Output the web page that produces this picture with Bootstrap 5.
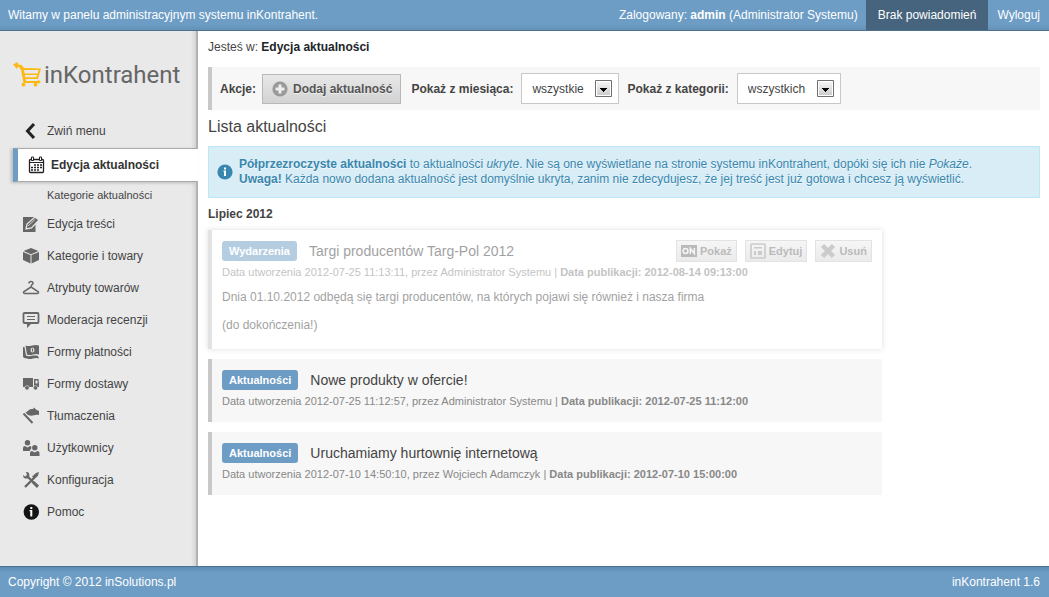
<!DOCTYPE html>
<html lang="pl">
<head>
<meta charset="utf-8">
<meta name="viewport" content="width=device-width, initial-scale=1">
<title>inKontrahent – Edycja aktualności</title>
<link href="https://cdn.jsdelivr.net/npm/bootstrap@5.3.0/dist/css/bootstrap.min.css" rel="stylesheet">
<style>
:root { --brand: #6d9dc5; --brand-dark: #4b7291; --ink: #444; }
body { font: 12px/16px "Liberation Sans", Arial, sans-serif; color: var(--ink); }
a { color: inherit; text-decoration: none; }
b { font-weight: 700; }
.bar { background: var(--brand); color: #fff; height: 31px; }
.bar-top { background: linear-gradient(var(--brand) 24px, #6591b6); border-bottom: 1px solid var(--brand-dark); }
.bar-bottom { background: linear-gradient(#5f8bb0, var(--brand) 6px); border-top: 1px solid var(--brand-dark); padding: 0 9px 0 8px; }
.notice { background: #46647d; padding: 0 12px; }
.logout { padding: 0 9px; }
.sidebar { width: 198px; background: linear-gradient(to left, #d4d4d4, #e9e9e9 5px); border-right: 2px solid #b2b2b2; }
.brand { height: 83px; padding: 4px 0 0 13px; font: 24px/32px Roboto, sans-serif; color: #666; gap: 2px; }
.menu-row { height: 32px; padding-left: 22px; gap: 7px; }
.menu-row svg, .current svg { flex: none; width: 18px; height: 18px; }
.menu-row svg { fill: #666; }
.collapse-row { height: 34px; }
.current { height: 34px; margin: 0 -2px 0 13px; padding-left: 9px; gap: 6px; background: #fff; color: #333; font-weight: 700; border: 1px solid #aaa; border-width: 1px 0; border-left: 5px solid var(--brand); box-shadow: -2px 1px 3px #bbb; }
.sub-row { height: 26px; padding-left: 47px; font-size: 11px; }
.content { padding: 8px 9px 8px 10px; }
.actions { height: 43px; margin-top: 12px; padding-left: 8px; background: #f7f7f7; border-left: 4px solid #c8c8c8; }
.actions-label { margin-right: 6px; }
.add { height: 30px; margin-right: 10px; padding: 0 8px 0 9px; gap: 5px; border: 1px solid #b8b8b8; background: linear-gradient(#e8e8e8, #d2d2d2); color: #555; font-weight: 700; text-shadow: 0 1px #eee; }
.add svg { width: 16px; height: 16px; }
.picker { appearance: none; height: 31px; padding: 0 34px 0 10px; border: 1px solid #c8c8c8; border-radius: 0; color: var(--ink); background: #fff url("data:image/svg+xml,%3Csvg xmlns='http://www.w3.org/2000/svg' width='17' height='17'%3E%3Cdefs%3E%3ClinearGradient id='g' x2='0' y2='1'%3E%3Cstop stop-color='%23f4f4f4'/%3E%3Cstop offset='1' stop-color='%23ccc'/%3E%3C/linearGradient%3E%3C/defs%3E%3Cpath d='M.5.5h16v16H.5z' fill='%23fff' stroke='%23707070'/%3E%3Cpath d='M2 2h13v13H2z' fill='url(%23g)'/%3E%3Cpath d='M5 8h7v1h-1v1h-1v1H9v1H8v-1H7v-1H6V9H5z'/%3E%3C/svg%3E") no-repeat right 6px center; }
.page-title { font-size: 16px; line-height: 20px; margin: 7px 0 9px; font-weight: 400; }
.info { height: 52px; padding: 0 8px; gap: 6px; background: #d9edf7; border: 1px solid #bce8f1; color: #3a87ad; line-height: 15px; text-shadow: 0 1px #f0f8fc; }
.info svg { flex: none; width: 16px; height: 16px; }
.month { font-size: 12px; line-height: 16px; margin: 8px 0; font-weight: 700; }
.entry { width: 81%; padding: 11px 10px 13px; margin-bottom: 10px; border-left: 4px solid #c8c8c8; background: #f7f7f7; }
.entry-head { min-height: 20px; margin-bottom: 4px; }
.entry-title { font-size: 14px; line-height: 18px; margin: 0; font-weight: 400; }
.tag { background: var(--brand); color: #fff; font-size: 11px; line-height: 20px; font-weight: 700; padding: 0 7px; border-radius: 3px; margin-right: 12px; }
.meta { font-size: 11px; line-height: 15px; color: #888; }
.draft { background: #fff; box-shadow: 0 0 5px #bbb; opacity: .5; height: 119px; padding-top: 10px; }
.draft .entry-head { margin-bottom: 3px; }
.draft .meta { margin-bottom: 9px; }
.draft p { margin: 0 0 12px; }
.tools { column-gap: 8px; }
.tool { height: 22px; padding: 0 4px; gap: 3px; border: 1px solid #c8c8c8; background: linear-gradient(#eee, #d8d8d8); color: #777; font-size: 11px; font-weight: 700; }
.tool svg { width: 16px; height: 16px; }
</style>
</head>
<body class="d-flex flex-column min-vh-100">
<header class="bar bar-top d-flex align-items-stretch justify-content-between">
  <div class="ps-2 d-flex align-items-center">Witamy w panelu administracyjnym systemu inKontrahent.</div>
  <nav class="d-flex align-items-stretch">
    <span class="d-flex align-items-center pe-2"><span>Zalogowany: <b>admin</b> (Administrator Systemu)</span></span>
    <a class="notice d-flex align-items-center" href="#">Brak powiadomień</a>
    <a class="logout d-flex align-items-center" href="#">Wyloguj</a>
  </nav>
</header>

<div class="d-flex flex-grow-1">
  <aside class="sidebar flex-shrink-0">
    <a class="brand d-flex align-items-center" href="#">
      <svg width="29" height="25" viewBox="0 0 29 25" aria-hidden="true"><path d="M0 2.500 4.500 0 5 2.500l3.500.5L11 6l17 .500L25 17H11l-.7-1.700h13l.8-2.300H10.500L10 11.500h14.700l1-3.500H11l2 11h12v-1.500l3 2.500-3 2v-1H10.500L8 8 6.500 5.500 4.500 5 4 7z" fill="#fdb813"/><circle cx="10.500" cy="22.700" r="1.900" fill="#fdb813"/><circle cx="22.500" cy="22.700" r="1.900" fill="#fdb813"/></svg>
      <span>inKontrahent</span>
    </a>
    <nav>
      <a class="menu-row collapse-row d-flex align-items-center" href="#"><svg viewBox="0 0 18 18"><path d="m12 2-6.500 7 6.500 7" fill="none" stroke="#222" stroke-width="3"/></svg>Zwiń menu</a>
      <a class="current d-flex align-items-center" href="#"><svg viewBox="0 0 18 18"><rect x="2.500" y="3.500" width="14" height="13" rx="1" fill="#fff" stroke="#222" stroke-width="1.300"/><path d="M2 6.500h15" stroke="#222"/><path d="M4.500 1h2v3.500h-2zM12.500 1h2v3.500h-2z" fill="#fff" stroke="#222"/><path d="M7 9h8M4 11.500h11M4 14h8" stroke="#222" stroke-width="1.700" stroke-dasharray="2 1"/></svg>Edycja aktualności</a>
      <a class="sub-row d-flex align-items-center" href="#">Kategorie aktualności</a>
      <a class="menu-row d-flex align-items-center" href="#"><svg viewBox="0 0 18 18"><path d="M1 2h12v15H1zM12 9h1.500v8H12z"/><path d="m4 14 1-5 8-7 4 3-7.500 8z" fill="#666" stroke="#e9e9e9" stroke-width="1.300"/><path d="m6 11 7-6.500" stroke="#e9e9e9" stroke-width=".8"/></svg>Edycja treści</a>
      <a class="menu-row d-flex align-items-center" href="#"><svg viewBox="0 0 18 18"><path d="m9 1 7.500 3L9 7.200 1.500 4zM1 5l7.500 3v8.500L1 13zM17 5v8l-7.500 3.500V8z"/></svg>Kategorie i towary</a>
      <a class="menu-row d-flex align-items-center" href="#"><svg viewBox="0 0 18 18"><path d="M7 4.500C7 2 11 2 11 4.200 11 5.500 9 5.500 9 8l7 4.500c1 1 .5 2-.5 2H2.500c-1 0-1.500-1-.5-2L9 8" fill="none" stroke="#666" stroke-width="1.500"/></svg>Atrybuty towarów</a>
      <a class="menu-row d-flex align-items-center" href="#"><svg viewBox="0 0 18 18"><path d="M2.500 2h13q1 0 1 1v8q0 1-1 1h-13q-1 0-1-1V3q0-1 1-1z" fill="none" stroke="#666" stroke-width="1.800"/><path d="M5 12h5l-5 5z"/><path d="M5 5.500h8M5 8.500h8" stroke="#666" stroke-width="1.200"/></svg>Moderacja recenzji</a>
      <a class="menu-row d-flex align-items-center" href="#"><svg viewBox="0 0 18 18"><path d="M3.500 2.500c5 2 8-2 13.500 0v9c-5-2-7 2-12 0zM1 4h1.500l1.500 8.500c4 2 7-1 12 .5l1 2.500c-5-2-7 2-12 0-2 0-4-1-4-2z"/><ellipse cx="10.500" cy="7" rx="2" ry="2.600" fill="#ddd"/><path d="M10.500 5.500v3" stroke="#666"/></svg>Formy płatności</a>
      <a class="menu-row d-flex align-items-center" href="#"><svg viewBox="0 0 18 18"><path d="M1 3h10v9H1zM12 4h4.500l.5 5v3h-5z"/><path d="M13.500 5.500h2v3h-2z" fill="#eee"/><circle cx="5" cy="12.800" r="2.200" stroke="#e9e9e9" stroke-width=".6"/><circle cx="13.500" cy="12.800" r="2.200" stroke="#e9e9e9" stroke-width=".6"/></svg>Formy dostawy</a>
      <a class="menu-row d-flex align-items-center" href="#"><svg viewBox="0 0 18 18"><path d="M3.500 5.500C7 4 6 2 11 2l1-1.500 2 2 3 1.500v4c-5-1-6 2-11 0z"/><path d="m1.500 6.500 9 9.500" stroke="#666" stroke-width="2"/></svg>Tłumaczenia</a>
      <a class="menu-row d-flex align-items-center" href="#"><svg viewBox="0 0 18 18"><circle cx="5.500" cy="3.800" r="2.700"/><path d="M1 9q0-2 2-2l2.500 1.500L8 7q1.500 0 1.500 2l-2 3H1z"/><circle cx="12.800" cy="8.700" r="2.700"/><path d="M8 14q0-2 2-2l2.700 1.500 2.800-1.500q2 0 2 2v3H8z"/></svg>Użytkownicy</a>
      <a class="menu-row d-flex align-items-center" href="#"><svg viewBox="0 0 18 18"><path d="m3 16 12-12M15.500 15.500 5 5" stroke="#666" stroke-width="2.400"/><path d="M4 1c3 0 4 2 3 5L5.500 7.500C3 8 1 7 1 4l2 1.500L5 4zM14 2l3-1-1 3.500-4 3-2-2zM12 10l5 4.500-2 2.500-5-5z"/></svg>Konfiguracja</a>
      <a class="menu-row d-flex align-items-center" href="#"><svg viewBox="0 0 18 18"><circle cx="9.300" cy="9" r="7.700" fill="#151515"/><path d="M8.300 4h2v2h-2zM7.500 7h2.800v6.500h-2V8.200h-.8z" fill="#fff"/></svg>Pomoc</a>
    </nav>
  </aside>

  <main class="content flex-grow-1">
    <div>Jesteś w: <b class="text-dark">Edycja aktualności</b></div>
    <form class="actions d-flex align-items-center">
      <b class="actions-label">Akcje:</b>
      <button type="button" class="add d-flex align-items-center"><svg viewBox="0 0 16 16"><circle cx="8" cy="8" r="7.600" fill="#999"/><path d="M6.500 3.500h3v3h3v3h-3v3h-3v-3h-3v-3h3z" fill="#eee"/></svg>Dodaj aktualność</button>
      <label class="fw-bold me-2" for="month">Pokaż z miesiąca:</label>
      <select class="picker me-2" id="month"><option>wszystkie</option></select>
      <label class="fw-bold me-2" for="category">Pokaż z kategorii:</label>
      <select class="picker" id="category"><option>wszystkich</option></select>
    </form>

    <h1 class="page-title">Lista aktualności</h1>
    <div class="info d-flex align-items-center" role="note">
      <svg viewBox="0 0 16 16"><circle cx="8" cy="8" r="7.600" fill="#3a87ad"/><path d="M7 3.500h2v2H7zM6.500 6.500H9V12H7V7.700h-.5z" fill="#fff"/></svg>
      <div><b>Półprzezroczyste aktualności</b> to aktualności <i>ukryte</i>. Nie są one wyświetlane na stronie systemu inKontrahent, dopóki się ich nie <i>Pokaże</i>.<br><b>Uwaga!</b> Każda nowo dodana aktualność jest domyślnie ukryta, zanim nie zdecydujesz, że jej treść jest już gotowa i chcesz ją wyświetlić.</div>
    </div>

    <h2 class="month">Lipiec 2012</h2>
    <article class="entry draft">
      <div class="entry-head d-flex align-items-center">
        <span class="tag">Wydarzenia</span>
        <h3 class="entry-title">Targi producentów Targ-Pol 2012</h3>
        <div class="d-flex ms-auto tools">
          <button type="button" class="tool d-flex align-items-center"><svg viewBox="0 0 16 16"><path d="M0 2h16v12H0z" fill="#777"/><path d="M9.300 11V5.500l4 5V5" fill="none" stroke="#eee" stroke-width="1.500"/><ellipse cx="4.500" cy="8" rx="2.400" ry="2.500" fill="none" stroke="#eee" stroke-width="1.500"/></svg>Pokaż</button>
          <button type="button" class="tool d-flex align-items-center"><svg viewBox="0 0 16 16"><rect x="1" y="1" width="14" height="14" rx="1" fill="none" stroke="#999" stroke-width="1.700"/><path d="M4 4h8v1.500H4zM4 8h2v4H4zM8 8h4v4H8z" fill="#999"/></svg>Edytuj</button>
          <button type="button" class="tool d-flex align-items-center"><svg viewBox="0 0 16 16"><path d="m2.500 2.500 11 11m0-11-11 11" stroke="#999" stroke-width="4.500"/></svg>Usuń</button>
        </div>
      </div>
      <div class="meta">Data utworzenia 2012-07-25 11:13:11, przez Administrator Systemu | <b>Data publikacji: 2012-08-14 09:13:00</b></div>
      <p>Dnia 01.10.2012 odbędą się targi producentów, na których pojawi się również i nasza firma</p>
      <p>(do dokończenia!)</p>
    </article>
    <article class="entry">
      <div class="entry-head d-flex align-items-center"><span class="tag">Aktualności</span><h3 class="entry-title">Nowe produkty w ofercie!</h3></div>
      <div class="meta">Data utworzenia 2012-07-25 11:12:57, przez Administrator Systemu | <b>Data publikacji: 2012-07-25 11:12:00</b></div>
    </article>
    <article class="entry">
      <div class="entry-head d-flex align-items-center"><span class="tag">Aktualności</span><h3 class="entry-title">Uruchamiamy hurtownię internetową</h3></div>
      <div class="meta">Data utworzenia 2012-07-10 14:50:10, przez Wojciech Adamczyk | <b>Data publikacji: 2012-07-10 15:00:00</b></div>
    </article>
  </main>
</div>

<footer class="bar bar-bottom d-flex align-items-center justify-content-between">
  <span>Copyright © 2012 inSolutions.pl</span><span>inKontrahent 1.6</span>
</footer>
<script src="https://cdn.jsdelivr.net/npm/bootstrap@5.3.0/dist/js/bootstrap.bundle.min.js"></script>
</body>
</html>
